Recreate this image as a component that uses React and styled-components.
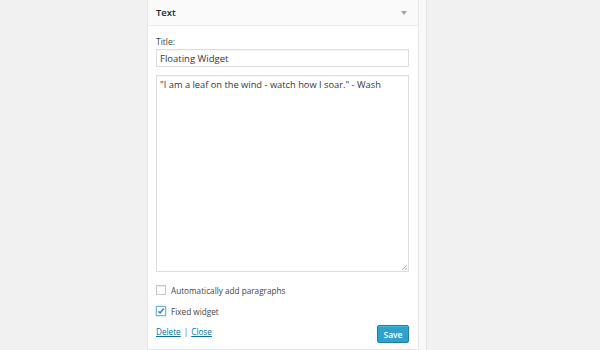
import React from "react";
import styled, { createGlobalStyle } from "styled-components";

const Global = createGlobalStyle`
  html, body { margin: 0; padding: 0; }
  body { background: #f1f1f1; font-family: "Open Sans", "DejaVu Sans", sans-serif; }
`;

const Page = styled.div`
  width: 600px;
  height: 350px;
  display: flex;
  overflow: hidden;
  background: #f1f1f1;
`;

const Sidebar = styled.div`
  margin-left: 147px;
  width: 272px;
  padding-right: 7px;
  border-right: 1px solid #e2e2e2;
  background: #f9f9f9;
  display: flex;
  flex-direction: column;
`;

const Widget = styled.div`
  flex: 1;
  background: #fff;
  border: 1px solid #e5e5e5;
  border-top: none;
  display: flex;
  flex-direction: column;
`;

const Header = styled.div`
  height: 26px;
  box-sizing: border-box;
  background: #fafafa;
  border-bottom: 1px solid #ececec;
  display: flex;
  align-items: center;
  justify-content: space-between;
  padding: 0 11px 0 8px;
`;

const HeaderTitle = styled.span`
  font-size: 9.5px;
  font-weight: 600;
  color: #23282d;
`;

const Arrow = styled.span`
  width: 0;
  height: 0;
  border-left: 3px solid transparent;
  border-right: 3px solid transparent;
  border-top: 4px solid #a0a5aa;
  margin-top: 1px;
`;

const Body = styled.div`
  padding: 8px 9px 0 8px;
  display: flex;
  flex-direction: column;
`;

const Label = styled.label`
  font-size: 8.5px;
  color: #444;
  line-height: 12px;
  margin-top: 2px;
  margin-bottom: 1px;
`;

const Input = styled.div`
  height: 18px;
  box-sizing: border-box;
  border: 1px solid #ddd;
  box-shadow: inset 0 1px 1px rgba(0,0,0,0.04);
  font-size: 9.5px;
  color: #32373c;
  padding: 0 3px;
  display: flex;
  align-items: center;
`;

const TextArea = styled.div`
  position: relative;
  margin-top: 8px;
  height: 197px;
  box-sizing: border-box;
  border: 1px solid #ddd;
  box-shadow: inset 0 1px 1px rgba(0,0,0,0.04);
  font-size: 9.3px;
  color: #32373c;
  padding: 2px 3px;
  line-height: 13px;
`;

const Grip = styled.svg`
  position: absolute;
  right: 1px;
  bottom: 1px;
`;

const CheckRow = styled.div`
  display: flex;
  align-items: center;
  gap: 5px;
  margin-top: ${(p) => p.$top}px;
  font-size: 8.2px;
  color: #444;
  height: 12px;
`;

const Box = styled.span`
  width: 10px;
  height: 10px;
  box-sizing: border-box;
  border: 1px solid ${(p) => (p.$checked ? "#7cb0d8" : "#c4c8cc")};
  box-shadow: ${(p) => (p.$checked ? "0 0 2px rgba(30,140,190,.5)" : "inset 0 1px 1px rgba(0,0,0,.08)")};
  background: #fff;
  display: flex;
  align-items: center;
  justify-content: center;
`;

const Footer = styled.div`
  margin-top: 8px;
  display: flex;
  justify-content: space-between;
  align-items: center;
`;

const Links = styled.div`
  font-size: 8.2px;
  color: #666;
  display: flex;
  gap: 3px;
  margin-top: -5px;
`;

const Link = styled.a`
  color: #0073aa;
  text-decoration: underline;
`;

const SaveButton = styled.button`
  width: 32px;
  height: 18px;
  box-sizing: border-box;
  background: #2ea2cc;
  border: 1px solid #0e85b0;
  border-radius: 2px;
  color: #fff;
  font-family: "Open Sans", sans-serif;
  font-size: 8.5px;
  font-weight: 600;
  padding: 0;
  box-shadow: inset 0 1px 0 rgba(120,200,230,.5);
`;

export default function App() {
  return (
    <>
      <Global />
      <Page>
        <Sidebar>
          <Widget>
            <Header>
              <HeaderTitle>Text</HeaderTitle>
              <Arrow />
            </Header>
            <Body>
              <Label>Title:</Label>
              <Input>Floating Widget</Input>
              <TextArea>
                "I am a leaf on the wind - watch how I soar." - Wash
                <Grip width="6" height="6" viewBox="0 0 6 6">
                  <path d="M6 1 L1 6 M6 4 L4 6" stroke="#999" strokeWidth="0.8" />
                </Grip>
              </TextArea>
              <CheckRow $top={12}>
                <Box />
                Automatically add paragraphs
              </CheckRow>
              <CheckRow $top={9}>
                <Box $checked>
                  <svg width="8" height="8" viewBox="0 0 8 8">
                    <path d="M1.3 4.2 L3.1 6 L6.8 1.6" fill="none" stroke="#1e8cbe" strokeWidth="1.5" />
                  </svg>
                </Box>
                Fixed widget
              </CheckRow>
              <Footer>
                <Links>
                  <Link>Delete</Link>|<Link>Close</Link>
                </Links>
                <SaveButton>Save</SaveButton>
              </Footer>
            </Body>
          </Widget>
        </Sidebar>
      </Page>
    </>
  );
}
